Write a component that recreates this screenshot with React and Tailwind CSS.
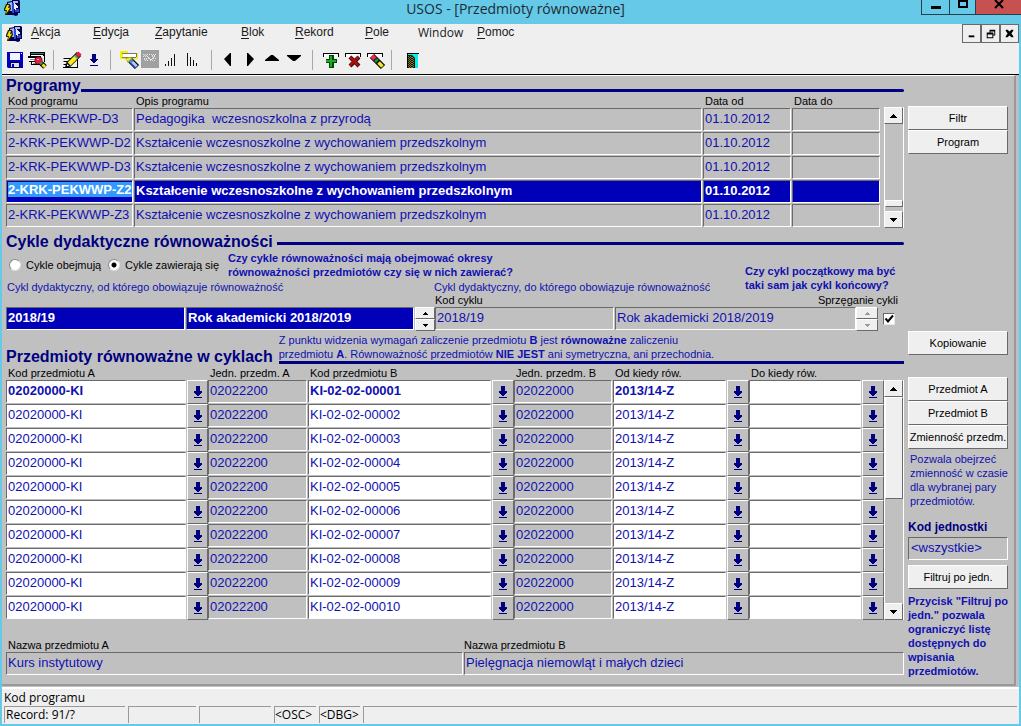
import React from 'react';

const programs = [
  { code: '2-KRK-PEKWP-D3', name: 'Pedagogika  wczesnoszkolna z przyrodą', from: '01.10.2012' },
  { code: '2-KRK-PEKWWP-D2', name: 'Kształcenie wczesnoszkolne z wychowaniem przedszkolnym', from: '01.10.2012' },
  { code: '2-KRK-PEKWWP-D3', name: 'Kształcenie wczesnoszkolne z wychowaniem przedszkolnym', from: '01.10.2012' },
  { code: '2-KRK-PEKWWP-Z2', name: 'Kształcenie wczesnoszkolne z wychowaniem przedszkolnym', from: '01.10.2012', active: true },
  { code: '2-KRK-PEKWWP-Z3', name: 'Kształcenie wczesnoszkolne z wychowaniem przedszkolnym', from: '01.10.2012' },
];

const subjects = Array.from({ length: 10 }, (_, i) => ({
  a: '02020000-KI',
  unitA: '02022200',
  b: `KI-02-02-${String(i + 1).padStart(5, '0')}`,
  unitB: '02022000',
  from: '2013/14-Z',
  active: i === 0,
}));

const menu = [
  { label: 'Akcja', width: 'w-[62px]' },
  { label: 'Edycja', width: 'w-[62px]' },
  { label: 'Zapytanie', width: 'w-[86px]' },
  { label: 'Blok', width: 'w-[54px]' },
  { label: 'Rekord', width: 'w-[70px]' },
  { label: 'Pole', width: 'w-[53px]' },
  { label: 'Window', width: 'w-[59px]', plain: true },
  { label: 'Pomoc', width: 'w-[60px]' },
];

const tones = {
  gray: 'bg-[#c0c0c0] text-[#1010b0]',
  white: 'bg-white text-[#1010b0]',
  blue: 'bg-[#0000b8] text-white font-bold',
};

const Field = ({ label, value = '', tone = 'gray', bold }) => (
  <input
    aria-label={label}
    defaultValue={value}
    className={`block w-full min-w-0 h-[23px] pl-px pb-0.5 text-[13px] border border-t-[#6a6a6a] border-l-[#6a6a6a] border-r-white border-b-white outline-none ${tones[tone]} ${bold ? 'font-bold' : ''}`}
  />
);

const Raised = ({ label, className = '', children, ...rest }) => (
  <button
    type="button"
    aria-label={label}
    className={`flex items-center justify-center border border-t-white border-l-white border-r-[#6a6a6a] border-b-[#6a6a6a] ${className}`}
    {...rest}
  >
    {children}
  </button>
);

const SideButton = ({ children, className = '' }) => (
  <button
    type="button"
    className={`w-full h-6 text-[11px] text-black whitespace-nowrap bg-[#efefef] border border-t-white border-l-white border-r-[#6a6a6a] border-b-[#6a6a6a] ${className}`}
  >
    {children}
  </button>
);

const Triangle = ({ up, small, color = '#000' }) => (
  <svg width={small ? 5 : 7} height={small ? 3 : 4} viewBox="0 0 7 4" shapeRendering="crispEdges">
    <path fill={color} d={up ? 'M3 0h1v1h1v1h1v1h1v1H0V3h1V2h1V1h1z' : 'M0 0h7v1H6v1H5v1H4v1H3V3H2V2H1V1H0z'} />
  </svg>
);

const DownArrow = () => (
  <svg width="10" height="13" viewBox="0 0 10 13" shapeRendering="crispEdges">
    <path fill="#000080" d="M3 0h4v5h2v2H8v1H7v1H6v1H4V9H3V8H2V7H1V5h2zM1 11h8v1H1z" />
  </svg>
);

const LovButton = ({ label }) => (
  <Raised label={label} className="w-full h-6 bg-[#c0c0c0]">
    <DownArrow />
  </Raised>
);

const Spinner = ({ disabled }) => (
  <div className="flex flex-col h-6">
    <Raised label="Poprzedni cykl" disabled={disabled} className="flex-1 bg-[#efefef]">
      <Triangle up small color={disabled ? '#999' : '#000'} />
    </Raised>
    <Raised label="Następny cykl" disabled={disabled} className="flex-1 bg-[#efefef]">
      <Triangle small color={disabled ? '#999' : '#000'} />
    </Raised>
  </div>
);

const ScrollBar = ({ before, thumb, after }) => (
  <div className="w-5 flex flex-col border-r border-white">
    <Raised label="Przewiń w górę" className="h-[17px] bg-[#efefef]"><Triangle up /></Raised>
    <div className="flex-1 flex flex-col bg-[#c0c0c0] border-l border-white">
      <div className={before} />
      <div className={`${thumb} bg-[#efefef] border border-t-white border-l-white border-r-[#6a6a6a] border-b-[#6a6a6a]`} />
      <div className={after} />
    </div>
    <Raised label="Przewiń w dół" className="h-[17px] bg-[#efefef]"><Triangle /></Raised>
  </div>
);

const Heading = ({ children, className = '', line }) => (
  <div className={`flex items-center ${className}`}>
    <h2 className="text-[16px] leading-5 font-bold text-[#000080] whitespace-nowrap">{children}</h2>
    <div className={`flex-1 h-[3px] rounded-r bg-[#000080] ${line}`} />
  </div>
);

const AppIcon = () => (
  <svg width="17" height="16" viewBox="0 0 17 16" aria-hidden="true">
    <path fill="#000050" d="M3 2l5-1V0h7l1 1v12h-2v2l-2 1-3-1H3z" />
    <path fill="#a8b8f0" d="M4 3l4-1v9H4zM9 1h5v2H9z" />
    <path fill="#3048d0" d="M5 5h2v3H5zM8 3h2v10H8zM11 9h4v3h-4z" />
    <path fill="#e8ecff" d="M10 3h1v1h1v1h1v1h1v2h-2v2h-1V9h-1z" />
    <path fill="#202000" d="M2 4h4v2L5 8h2v1l-4 6H1l1-4H0V9z" />
    <path fill="#f8e000" d="M3 5h2L4 8h2l-4 6 1-4H1z" />
  </svg>
);

const icons = {
  save: (
    <>
      <path fill="#0000c0" d="M3 3h16v16H4l-1-1z" />
      <path fill="#f4f4ff" d="M6 4h10v7H6z" />
      <path fill="#000060" d="M6 13h10v6H6z" />
      <path fill="#dcdcdc" d="M7 14h8v4H7z" />
      <path fill="#0000b0" d="M8 15h2v3H8z" />
      <path fill="#fff" d="M17 4h1v1h-1z" />
    </>
  ),
  print: (
    <>
      <path fill="#000" d="M4 3h15v10h-1V7H4z" />
      <path fill="#2a7a8a" d="M5 4h13v1H5z" />
      <path fill="#fff" d="M5 6h12v1H5z" />
      <path fill="#000" d="M2 7h13v10h-1v-1H5v-3H3V9H2z" />
      <path fill="#fff" d="M3 9h8v3H3zM6 13h7v2H6z" />
      <path fill="#888" d="M4 10h5v1H4zM7 14h3v1H7z" />
      <circle cx="12.500" cy="11.500" r="4" fill="#600018" />
      <circle cx="12.500" cy="11.500" r="3.200" fill="#e02048" />
      <path fill="#ffa0b0" d="M11 10h2v1h-2z" />
      <path stroke="#000" strokeWidth="5" d="M15 14l4 4" />
      <path stroke="#30a040" strokeWidth="3" d="M14.500 13.500l1.500 1.500" />
      <path stroke="#f0e020" strokeWidth="3" d="M16.500 15.500l2.500 2.500" />
    </>
  ),
  edit: (
    <>
      <path stroke="#000" d="M2.500 9.500h8M2.500 12.500h6M2.500 15.500h4M2 18.500h15M16.500 10v9" fill="none" />
      <path stroke="#000" strokeWidth="6" d="M7 16L18 5" />
      <path stroke="#f4ec20" strokeWidth="4" d="M8 15l7-7" />
      <path stroke="#b89800" strokeWidth="1" d="M9.500 16.500l7-7" />
      <path stroke="#30b080" strokeWidth="4" d="M14.500 8.500l1.500-1.500" />
      <path stroke="#e82040" strokeWidth="4.500" d="M16 7l3-3" />
      <path fill="#000" d="M4 19l1-5 4 4z" />
      <path fill="#fff" d="M6 17l0-2 2 2z" />
    </>
  ),
  get: <path fill="#000080" d="M9 5h4v5h2v1h-1v1h-1v1h-1v1h-2v-1H9v-1H8v-1H7v-1h2zM7 16h8v1H7z" />,
  query: (
    <>
      <path fill="#f8f000" d="M2 2h8v2h10v6H2z" />
      <path fill="#777" d="M4 4h15v1H4zM4 8h14v1H4zM18 5h1v3h-1z" />
      <path fill="#fff" d="M5 5h13v3H5z" />
      <path stroke="#000" strokeWidth="6" d="M11 10l8 8" />
      <path fill="#c8b000" d="M7 9l6-1 2 2-5 4z" />
      <path fill="#f8f040" d="M8 10l4-1 1 1-3 2z" />
      <path stroke="#3890d8" strokeWidth="4" d="M12 11l2 2" />
      <path stroke="#b0c8ff" strokeWidth="3.500" d="M14 13l4.500 4.500" />
      <path stroke="#2040c0" strokeWidth="1.500" d="M13 14.500l4.500 4.500" />
    </>
  ),
  disabled: (
    <>
      <path fill="#a0a0a0" d="M1 1h18v18H1z" />
      <path fill="none" stroke="#e4e4e4" strokeDasharray="1 1" d="M3 5.500h13M3 7.500h4M4 9.500h5M5 11.500h4M12 7.500h4M13 9.500h3M10 11.500h5M12 6.500h4M4 6.500h4M4 10.500h4" />
      <path fill="none" stroke="#eee" d="M7 7l4 4 4-4" />
    </>
  ),
  barsUp: <path fill="#111" d="M3 15h1v2H3zM6 12h1v5H6zM9 9h1v8H9zM12 5h1v12h-1z" />,
  barsDown: <path fill="#111" d="M3 4h1v13H3zM6 8h1v9H6zM9 11h1v6H9zM12 14h1v3h-1z" />,
  prev: <path fill="#000" d="M5 10l6-6h1v13h-1z" />,
  next: <path fill="#000" d="M13 10L7 4H6v13h1z" />,
  up: <path fill="#000" d="M2 12h14v-1l-6-5H8l-6 5z" />,
  down: <path fill="#000" d="M2 6h14v1l-6 5H8L2 7z" />,
  add: (
    <>
      <path fill="#000" d="M3 4h16v4H3z" />
      <path fill="#fff" d="M4 5h14v3H4z" />
      <path fill="#004800" d="M9 6h5v4h3v4h-3v5H9v-5H6v-4h3z" />
      <path fill="#20a828" d="M10 7h2v4h4v2h-4v5h-2v-5H6v-2h4z" />
    </>
  ),
  remove: (
    <>
      <path fill="#000" d="M3 4h16v4H3z" />
      <path fill="#fff" d="M4 5h14v3H4z" />
      <path fill="none" stroke="#400000" strokeWidth="4" d="M8 8l9 9M17 8l-9 9" />
      <path fill="none" stroke="#a81010" strokeWidth="2.500" d="M8 8l8.500 8.500M16.500 8L8 16.500" />
    </>
  ),
  clear: (
    <>
      <path fill="#000" d="M3 4h16v4H3z" />
      <path fill="#fff" d="M4 5h14v3H4z" />
      <path fill="none" stroke="#000" strokeWidth="6" d="M8 7l11 11" />
      <path fill="none" stroke="#f02858" strokeWidth="4.500" d="M8 7l3 3" />
      <path fill="none" stroke="#208830" strokeWidth="4" d="M11.500 10.500l2 2" />
      <path fill="none" stroke="#f0e820" strokeWidth="3.500" d="M14.500 13.500l4 4" />
    </>
  ),
  exit: (
    <>
      <path fill="#000" d="M8 4h12v1H8zM8 4h1v15H8z" />
      <path fill="#00f0f0" d="M9 5h10v14H9z" />
      <path fill="#101000" d="M9 6h4l3 3v10H9z" />
      <path stroke="#8a7a20" strokeDasharray="1 1" fill="none" d="M9.500 7v12M11.500 7v12M13.500 8v11" />
      <path stroke="#8a7a20" strokeDasharray="1 1" fill="none" d="M10.500 8v11M12.500 8v11M14.500 9v10" />
    </>
  ),
};

const toolGroups = [
  [['save', 'Zapisz'], ['print', 'Drukuj']],
  [['edit', 'Edytuj'], ['get', 'Lista wartości']],
  [['query', 'Zapytanie'], ['disabled', 'Wykonaj'], ['barsUp', 'Rosnąco'], ['barsDown', 'Malejąco']],
  [['prev', 'Poprzedni blok'], ['next', 'Następny blok'], ['up', 'Poprzedni rekord'], ['down', 'Następny rekord']],
  [['add', 'Dodaj rekord'], ['remove', 'Usuń rekord'], ['clear', 'Wyczyść rekord']],
  [['exit', 'Wyjście']],
];

const TitleBar = () => (
  <header className="h-6 flex items-start text-[#1c2b33]">
    <div className="w-[110px] pl-1"><AppIcon /></div>
    <h1 className="flex-1 text-center text-[14px] leading-[18px] font-['Open_Sans',sans-serif]">USOS - [Przedmioty równoważne]</h1>
    <div className="w-[100px] h-[15px] flex border-b border-l border-[#23414d]">
      <button type="button" aria-label="Minimalizuj" className="w-7 flex justify-center items-center border-r border-[#23414d]">
        <svg width="10" height="3"><path d="M0 0h10v3H0z" /></svg>
      </button>
      <button type="button" aria-label="Maksymalizuj" className="w-[26px] flex justify-center items-start border-r border-[#23414d]">
        <svg width="10" height="8"><path d="M1 0v7h8V0M0 1h10" fill="none" stroke="#000" strokeWidth="2" /></svg>
      </button>
      <button type="button" aria-label="Zamknij" className="flex-1 flex justify-center items-start bg-[#c75050]">
        <svg width="10" height="9"><path d="M1 0l8 8M9 0L1 8" stroke="#000" strokeWidth="2" /></svg>
      </button>
    </div>
  </header>
);

const MenuBar = () => (
  <nav className="h-[21px] flex items-start pl-1 text-[12px] leading-4 text-[#1a1a1a]">
    <div className="w-[25px] pt-0.5"><AppIcon /></div>
    {menu.map((item) => (
      <button
        key={item.label}
        type="button"
        className={`text-left ${item.width} ${item.plain ? "font-['Open_Sans',sans-serif] pt-px" : ''}`}
      >
        {item.plain ? item.label : <><span className="underline underline-offset-2">{item.label[0]}</span>{item.label.slice(1)}</>}
      </button>
    ))}
    <div className="ml-auto flex">
      {[
        ['Minimalizuj okno', 'M6 11h6v2H6z'],
        ['Przywróć okno', 'M8 5h6v6h-2v3H5V8h3zM9 7v1h3v2h1V7zM6 10v3h5v-3z'],
        ['Zamknij okno', 'M5 5h2l2 2 2-2h2v1l-2 3 2 3v1h-2l-2-2-2 2H5v-1l2-3-2-3z'],
      ].map(([label, d]) => (
        <button key={label} type="button" aria-label={label} className="w-[19px] h-[19px] border border-[#6a6a6a]">
          <svg width="17" height="17" viewBox="0 0 18 18"><path d={d} fillRule="evenodd" /></svg>
        </button>
      ))}
    </div>
  </nav>
);

const ToolBar = () => (
  <div className="h-[29px] flex items-center pl-0.5">
    {toolGroups.map((group, i) => (
      <React.Fragment key={i}>
        {i > 0 && <div className="w-px h-5 ml-[5px] mr-[7px] bg-[#a8a8a8]" />}
        {group.map(([icon, label]) => (
          <button key={icon} type="button" aria-label={label} className="w-[22px] h-[22px]">
            <svg width="22" height="22" viewBox="0 0 22 22">{icons[icon]}</svg>
          </button>
        ))}
      </React.Fragment>
    ))}
  </div>
);

const ProgramsTable = () => (
  <div className="flex items-end">
    <table className="flex-1 table-fixed w-full border-separate border-spacing-0">
      <colgroup>
        <col className="w-[128px]" />
        <col />
        <col className="w-[89px]" />
        <col className="w-[89px]" />
      </colgroup>
      <thead>
        <tr className="h-[13px] text-[11px] leading-[13px] text-left">
          {['Kod programu', 'Opis programu', 'Data od', 'Data do'].map((h) => (
            <th key={h} className="p-0 pl-0.5 font-normal">{h}</th>
          ))}
        </tr>
      </thead>
      <tbody>
        {programs.map((p) => {
          const tone = p.active ? 'blue' : 'gray';
          return (
            <tr key={p.code} className="h-6 align-top">
              <td className="p-0 pr-px">
                {p.active ? (
                  <div className="h-[23px] pl-px pt-px border border-t-[#6a6a6a] border-l-[#6a6a6a] border-r-white border-b-white bg-[#0000b8]">
                    <input aria-label="Kod programu" defaultValue={p.code} className="block w-[124px] h-[15px] bg-[#3399ff] text-white text-[13px] font-bold outline-none" />
                  </div>
                ) : (
                  <Field label="Kod programu" value={p.code} />
                )}
              </td>
              <td className="p-0 pr-px"><Field label="Opis programu" value={p.name} tone={tone} /></td>
              <td className="p-0 pr-px"><Field label="Data od" value={p.from} tone={tone} /></td>
              <td className="p-0 pr-px"><Field label="Data do" tone={tone} /></td>
            </tr>
          );
        })}
      </tbody>
    </table>
    <div className="flex h-[121px] ml-[3px]">
      <ScrollBar before="flex-1" thumb="h-[7px]" after="h-1" />
    </div>
  </div>
);

const cycleGrid = 'grid grid-cols-[180px_229px_20px_180px_1fr_22px_26px]';

const Cycles = () => (
  <section>
    <Heading className="h-[19px] mt-1" line="ml-1 mt-1">Cykle dydaktyczne równoważności</Heading>
    <div className="flex text-[11px] leading-[14px]">
      <div className="flex-1">
        <div className="flex h-7">
          <div className="w-[222px] flex items-center whitespace-nowrap">
            {['Cykle obejmują', 'Cykle zawierają się'].map((label, i) => (
              <label key={label} className="flex items-center w-[99px]">
                <input
                  type="radio"
                  name="mode"
                  defaultChecked={i === 1}
                  className="appearance-none shrink-0 w-3 h-3 ml-[3px] mr-[5px] rounded-full bg-white border border-[#888] border-r-[#e0e0e0] border-b-[#e0e0e0] checked:bg-[radial-gradient(circle,#000_2px,#fff_3px)]"
                />
                {label}
              </label>
            ))}
          </div>
          <p className="font-bold text-[#1010b0]">
            Czy cykle równoważności mają obejmować okresy<br />
            równoważności przedmiotów czy się w nich zawierać?
          </p>
        </div>
        <div className="flex text-[#1010b0] pl-px pt-px">
          <p className="w-[427px]">Cykl dydaktyczny, od którego obowiązuje równoważność</p>
          <p className="flex-1">Cykl dydaktyczny, do którego obowiązuje równoważność</p>
        </div>
      </div>
      <p className="w-[159px] pt-[13px] font-bold text-[#1010b0] whitespace-nowrap">
        Czy cykl początkowy ma być<br />
        taki sam jak cykl końcowy?
      </p>
    </div>
    <div className={`${cycleGrid} h-[13px] text-[11px] leading-3`}>
      <span className="col-start-4">Kod cyklu</span>
      <span>Opis cyklu</span>
      <label htmlFor="couple" className="col-start-5 col-span-3 row-start-1 justify-self-end mr-1.5">Sprzęganie cykli</label>
    </div>
    <div className={cycleGrid}>
      <div className="pr-px"><Field label="Kod cyklu od" value="2018/19" tone="blue" /></div>
      <div className="pr-px"><Field label="Opis cyklu od" value="Rok akademicki 2018/2019" tone="blue" /></div>
      <Spinner />
      <div className="pr-px"><Field label="Kod cyklu" value="2018/19" /></div>
      <Field label="Opis cyklu" value="Rok akademicki 2018/2019" />
      <Spinner disabled />
      <div className="relative flex items-center pl-[5px]">
        <input
          id="couple"
          type="checkbox"
          defaultChecked
          className="peer appearance-none w-3 h-3 bg-white border border-[#6a6a6a] border-r-[#e8e8e8] border-b-[#e8e8e8]"
        />
        <svg width="12" height="12" viewBox="0 0 12 12" className="absolute pointer-events-none opacity-0 peer-checked:opacity-100">
          <path d="M2.500 5.500l2.500 3 5-6" fill="none" stroke="#000" strokeWidth="2" />
        </svg>
      </div>
    </div>
  </section>
);

const SubjectsTable = () => (
  <div className="flex items-end">
    <table className="flex-1 table-fixed w-full border-separate border-spacing-0">
      <colgroup>
        <col className="w-[181px]" />
        <col className="w-[21px]" />
        <col className="w-[100px]" />
        <col />
        <col className="w-[22px]" />
        <col className="w-[99px]" />
        <col className="w-[114px]" />
        <col className="w-[22px]" />
        <col className="w-[113px]" />
        <col className="w-[22px]" />
      </colgroup>
      <thead>
        <tr className="h-[13px] text-[11px] leading-[13px] text-left whitespace-nowrap">
          <th colSpan={2} className="p-0 pl-0.5 font-normal">Kod przedmiotu A</th>
          <th className="p-0 pl-0.5 font-normal">Jedn. przedm. A</th>
          <th colSpan={2} className="p-0 pl-0.5 font-normal">Kod przedmiotu B</th>
          <th className="p-0 pl-0.5 font-normal">Jedn. przedm. B</th>
          <th colSpan={2} className="p-0 pl-0.5 font-normal">Od kiedy rów.</th>
          <th colSpan={2} className="p-0 pl-0.5 font-normal">Do kiedy rów.</th>
        </tr>
      </thead>
      <tbody>
        {subjects.map((s) => (
          <tr key={s.b} className="h-6 align-top">
            <td className="p-0 pr-px"><Field label="Kod przedmiotu A" value={s.a} tone="white" bold={s.active} /></td>
            <td className="p-0"><LovButton label="Lista przedmiotów A" /></td>
            <td className="p-0 pr-px"><Field label="Jedn. przedm. A" value={s.unitA} /></td>
            <td className="p-0 pr-px"><Field label="Kod przedmiotu B" value={s.b} tone="white" bold={s.active} /></td>
            <td className="p-0"><LovButton label="Lista przedmiotów B" /></td>
            <td className="p-0 pr-px"><Field label="Jedn. przedm. B" value={s.unitB} /></td>
            <td className="p-0 pr-px"><Field label="Od kiedy rów." value={s.from} tone="white" bold={s.active} /></td>
            <td className="p-0"><LovButton label="Lista cykli od" /></td>
            <td className="p-0 pr-px"><Field label="Do kiedy rów." tone="white" /></td>
            <td className="p-0"><LovButton label="Lista cykli do" /></td>
          </tr>
        ))}
      </tbody>
    </table>
    <div className="flex h-60">
      <ScrollBar before="h-0" thumb="h-[102px]" after="flex-1" />
    </div>
  </div>
);

const SidePanel = () => (
  <aside className="w-[100px] pt-[30px] text-[11px] leading-[14px] text-[#1010b0]">
    <SideButton>Filtr</SideButton>
    <SideButton>Program</SideButton>
    <SideButton className="mt-[177px]">Kopiowanie</SideButton>
    <SideButton className="mt-[22px]">Przedmiot A</SideButton>
    <SideButton>Przedmiot B</SideButton>
    <SideButton>Zmienność przedm.</SideButton>
    <p className="pl-0.5 pt-[3px] whitespace-nowrap">
      Pozwala obejrzeć<br />zmienność w czasie<br />dla wybranej pary<br />przedmiotów.
    </p>
    <label className="block pt-3 text-[12px] font-bold text-[#000080]">
      <span className="block pb-[3px]">Kod jednostki</span>
      <input defaultValue="<wszystkie>" className="block w-full h-[23px] pl-0.5 pb-0.5 text-[13px] font-normal text-[#1010b0] bg-[#c0c0c0] border border-t-[#6a6a6a] border-l-[#6a6a6a] border-r-white border-b-white outline-none" />
    </label>
    <SideButton className="mt-[5px]">Filtruj po jedn.</SideButton>
    <p className="pt-[5px] font-bold whitespace-nowrap">
      Przycisk "Filtruj po<br />jedn." pozwala<br />ograniczyć listę<br />dostępnych do<br />wpisania<br />przedmiotów.
    </p>
  </aside>
);

const StatusBar = () => (
  <footer className="mt-px px-0.5 pb-px bg-[#efefef] border-t-2 border-white text-[12px] leading-[17px] text-black font-['Open_Sans',sans-serif]">
    <p>Kod programu</p>
    <div className="flex gap-[3px] h-[17px] whitespace-nowrap">
      <div className="w-[121px] pl-px border-t border-l border-[#999] leading-4">Record: 91/?</div>
      <div className="w-[68px] border-t border-l border-[#999]" />
      <div className="w-[72px] border-t border-l border-[#999]" />
      <div className="w-[42px] border-t border-l border-[#999] leading-4">&lt;OSC&gt;</div>
      <div className="w-[41px] border-t border-l border-[#999] leading-4">&lt;DBG&gt;</div>
      <div className="flex-1 border-t border-l border-[#999]" />
    </div>
  </footer>
);

const App = () => (
  <div className="min-h-screen flex flex-col bg-[#66c9e8] text-black font-['Liberation_Sans',Arial,sans-serif]">
    <TitleBar />
    <div className="flex-1 flex flex-col mx-0.5 mb-0.5 bg-[#c0c0c0]">
      <div className="bg-[#efefef] border-b border-black">
        <MenuBar />
        <ToolBar />
      </div>
      <main className="flex-1 flex gap-1 border-t border-t-white pl-1 pr-1.5 mr-[3px] border-r-2 border-r-[#999] border-b-2 border-b-[#999]">
        <div className="flex-1 min-w-0">
          <section>
            <Heading className="h-[19px]" line="mt-2.5">Programy</Heading>
            <ProgramsTable />
          </section>
          <Cycles />
          <section className="mt-0.5">
            <div className="flex items-end">
              <h2 className="mr-1.5 text-[16px] leading-[14px] font-bold text-[#000080] whitespace-nowrap">Przedmioty równoważne w cyklach</h2>
              <p className="flex-1 border-b-[3px] border-[#000080] text-[11px] leading-[14px] text-[#1010b0]">
                Z punktu widzenia wymagań zaliczenie przedmiotu <b>B</b> jest <b>równoważne</b> zaliczeniu<br />
                przedmiotu <b>A</b>. Równoważność przedmiotów <b>NIE JEST</b> ani symetryczna, ani przechodnia.
              </p>
            </div>
            <div className="pt-[3px]"><SubjectsTable /></div>
          </section>
          <div className="flex mt-[18px] text-[11px] leading-[14px]">
            <label className="flex-1 pr-px"><span className="pl-0.5">Nazwa przedmiotu A</span><Field label="Nazwa przedmiotu A" value="Kurs instytutowy" /></label>
            <label className="w-[440px]">Nazwa przedmiotu B<Field label="Nazwa przedmiotu B" value="Pielęgnacja niemowląt i małych dzieci" /></label>
          </div>
        </div>
        <SidePanel />
      </main>
      <StatusBar />
    </div>
  </div>
);

export default App;
